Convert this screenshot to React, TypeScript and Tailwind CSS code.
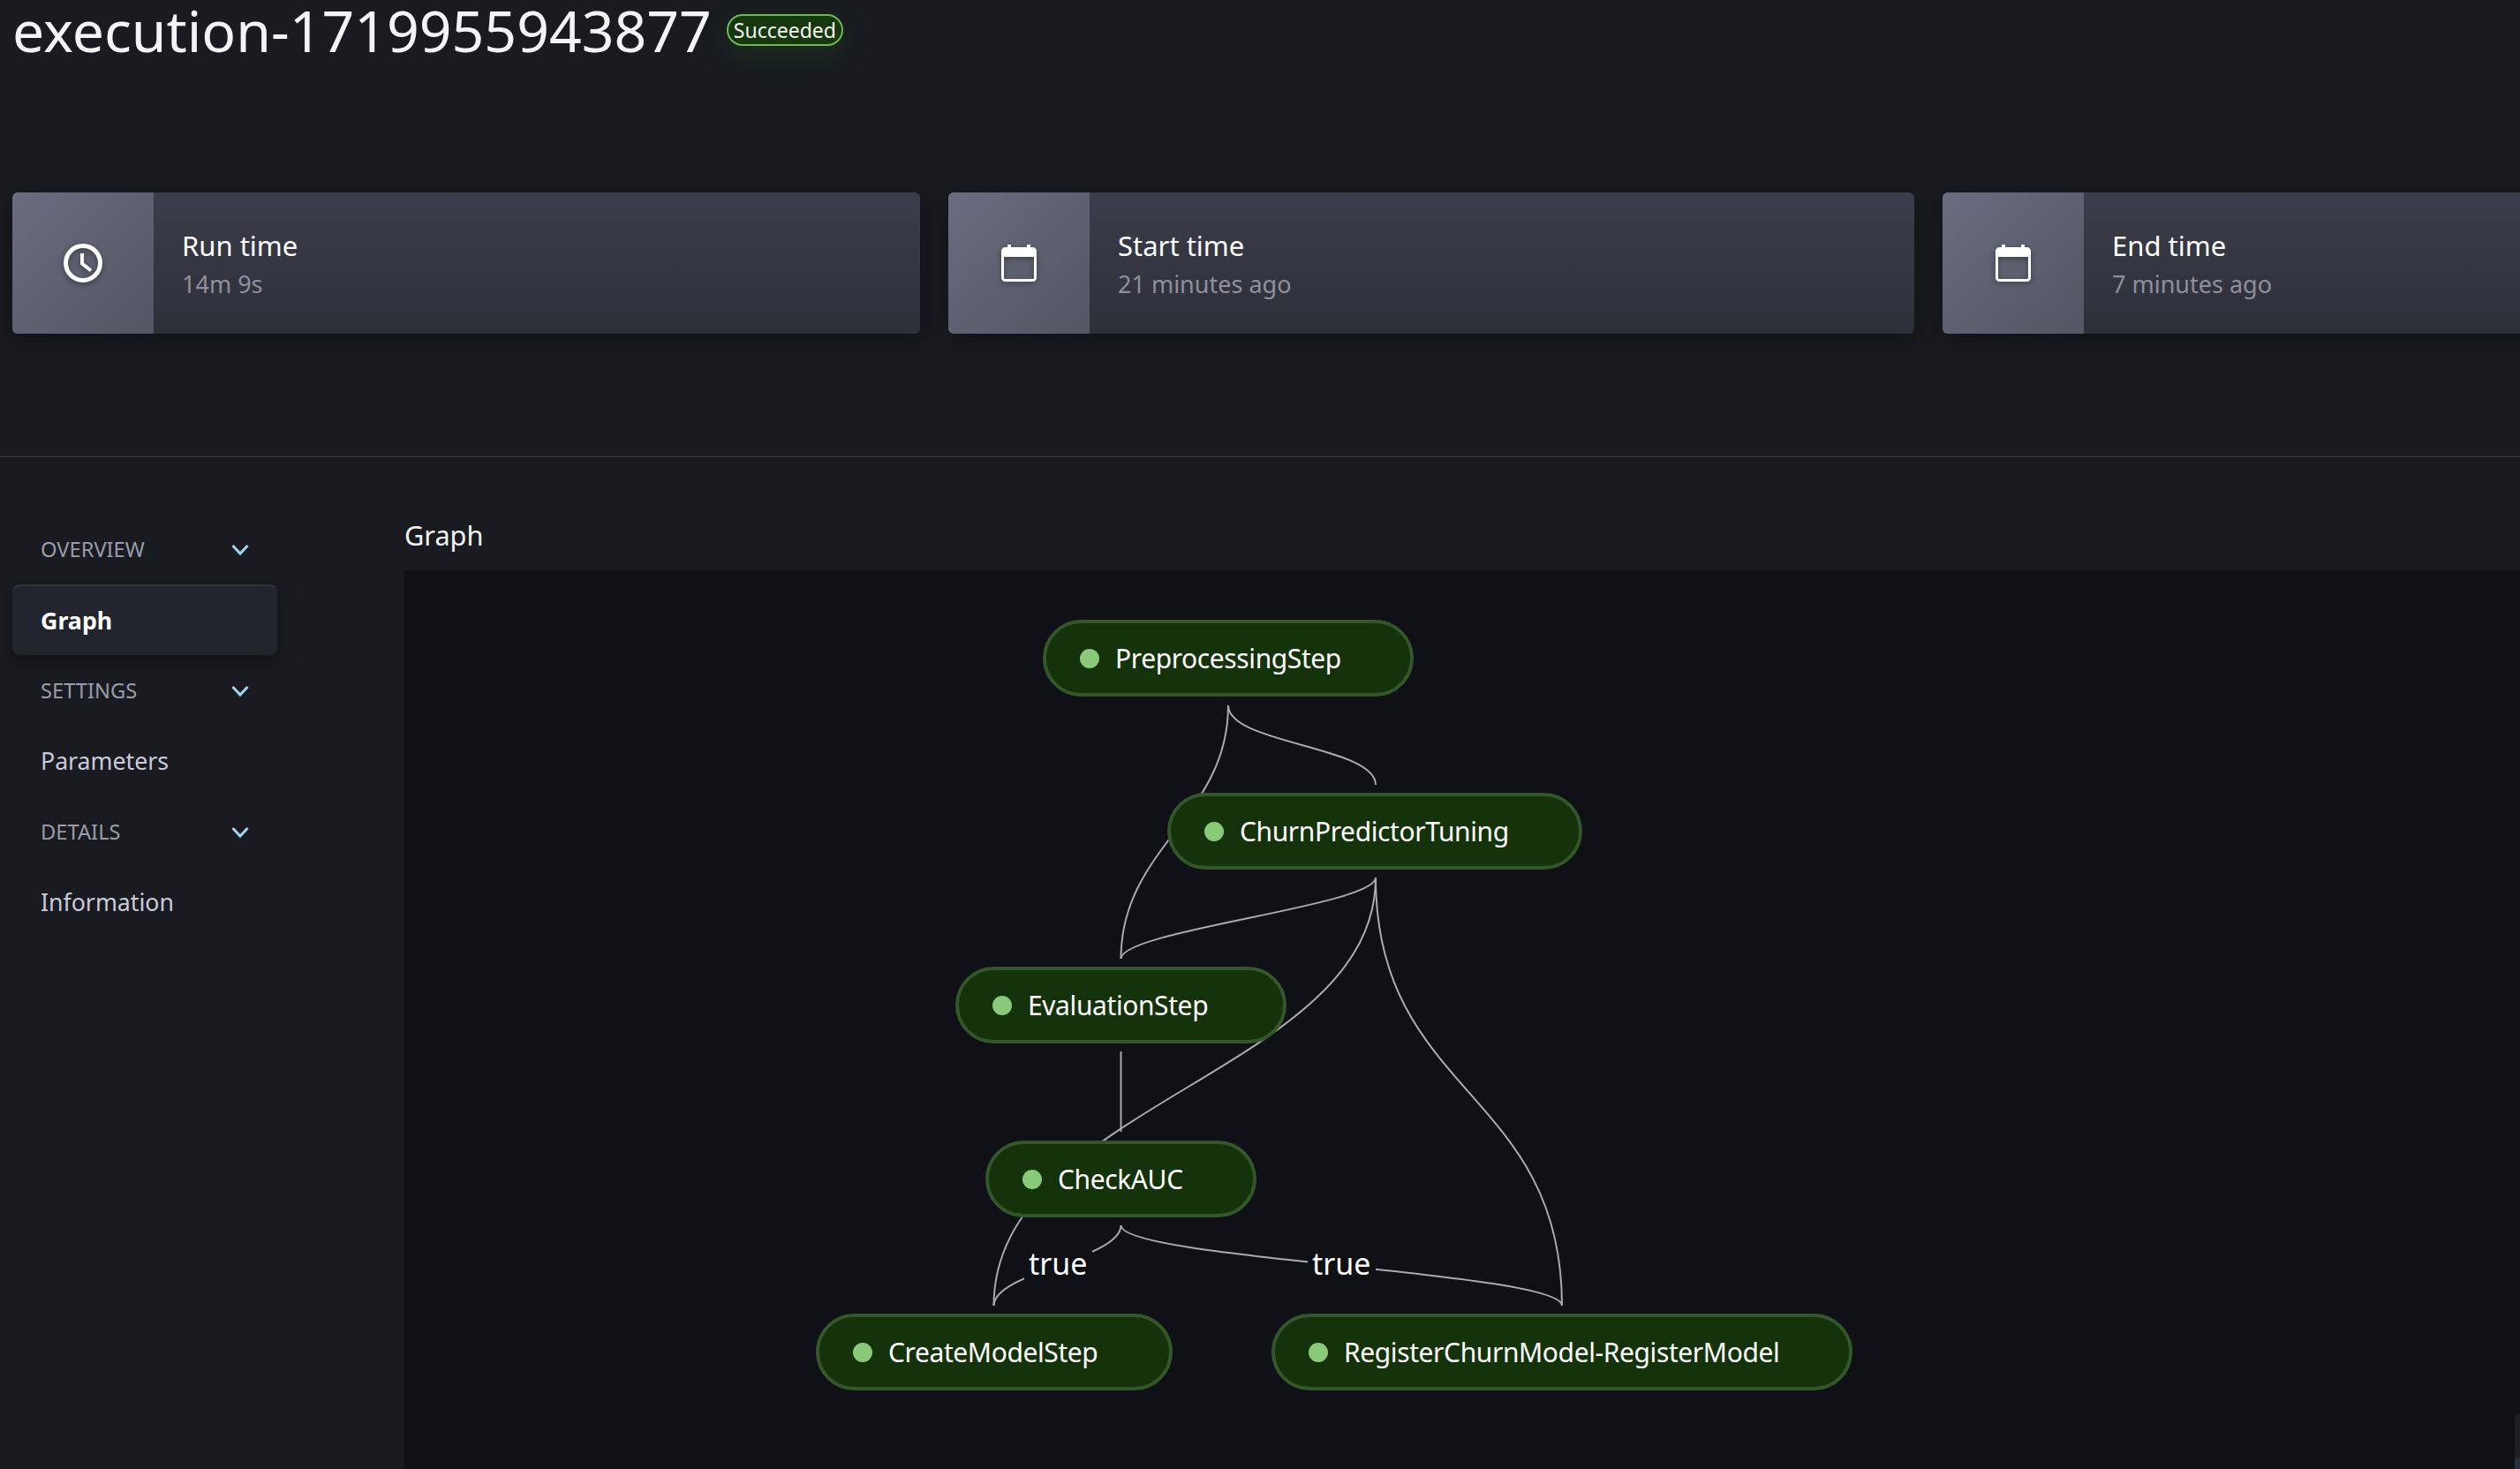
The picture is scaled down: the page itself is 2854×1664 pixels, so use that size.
const font = "font-['Noto_Sans',sans-serif]";

const sideNav = [
  { label: "OVERVIEW", heading: true },
  { label: "Graph", active: true },
  { label: "SETTINGS", heading: true },
  { label: "Parameters" },
  { label: "DETAILS", heading: true },
  { label: "Information" },
];

const nodes = [
  { name: "PreprocessingStep", pos: "left-[723px] top-[56px] w-[420px]" },
  { name: "ChurnPredictorTuning", pos: "left-[864px] top-[252px] w-[470px]" },
  { name: "EvaluationStep", pos: "left-[624px] top-[449px] w-[375px]" },
  { name: "CheckAUC", pos: "left-[658px] top-[646px] w-[307px]" },
  { name: "CreateModelStep", pos: "left-[466px] top-[842px] w-[404px]" },
  { name: "RegisterChurnModel-RegisterModel", pos: "left-[982px] top-[842px] w-[658px]" },
];

// edge paths use page coordinates, the svg viewBox is offset to the canvas
const edges = [
  "M1391 799 C1391 843 1558 845 1558 889",
  "M1391 799 C1391 925 1269.5 960 1269.5 1086",
  "M1558 994 C1558 1026 1269.5 1054 1269.5 1086",
  "M1558 994 C1558 1215 1125.5 1250 1125.5 1479",
  "M1558 994 C1558 1240 1769 1235 1769 1479",
  "M1269.5 1191 L1269.5 1282",
  "M1269.5 1388 C1269.5 1426 1125.5 1441 1125.5 1479",
  "M1269.5 1388 C1269.5 1426 1769 1441 1769 1479",
];

function ClockIcon() {
  return (
    <svg viewBox="0 0 44 44" className="w-[44px] h-[44px] drop-shadow-[0_2px_3px_rgba(0,0,0,0.4)]" fill="none" stroke="#fff">
      <circle cx="22" cy="22" r="19.5" strokeWidth="5" />
      <path d="M21 11 V22.5 L31 30.5" strokeWidth="4" />
    </svg>
  );
}

function CalendarIcon() {
  return (
    <svg viewBox="0 0 40 44" className="w-[40px] h-[44px] drop-shadow-[0_2px_3px_rgba(0,0,0,0.4)]" fill="none">
      <path d="M9 1 V8 M31 1 V8" stroke="#fff" strokeWidth="4" />
      <rect x="1.5" y="5.5" width="37" height="36" rx="3" stroke="#fff" strokeWidth="3" />
      <rect x="2" y="6" width="36" height="9" fill="#fff" />
    </svg>
  );
}

function StatCard({ icon, title, value, width }: { icon: React.ReactNode; title: string; value: string; width: string }) {
  return (
    <div className={`${width} shrink-0 h-[160px] flex rounded-[6px] overflow-hidden shadow-[0_6px_24px_rgba(0,0,0,0.35)] bg-gradient-to-b from-[#3b3d4a] to-[#2d2f39]`}>
      <div className="w-[160px] shrink-0 flex items-center justify-center bg-gradient-to-br from-[#6a6d80] to-[#535562]">
        {icon}
      </div>
      <div className="pl-[32px] pt-[40px]">
        <p className="text-[31px] leading-[40px] text-white">{title}</p>
        <p className="text-[27px] leading-[48px] text-[#8f909c]">{value}</p>
      </div>
    </div>
  );
}

function Chevron() {
  return (
    <svg viewBox="0 0 20 14" className="w-[20px] h-[14px]" fill="none" stroke="#a5d3f2" strokeWidth="3">
      <path d="M1.5 2 L10 11 L18.5 2" />
    </svg>
  );
}

export default function App() {
  return (
    <div className={`${font} w-[2854px] h-[1664px] overflow-hidden bg-[#191b20] text-white flex flex-col`}>
      <header className="h-[218px] shrink-0 pl-[14px]">
        <div className="flex items-center gap-[17px] h-[68px]">
          <h1 className="text-[64.3px] leading-[68px] font-normal text-[#f4f4f6]">execution-1719955943877</h1>
          <span className="h-[36px] px-[6px] flex items-center rounded-full border-2 border-[#6ab955] bg-[#17380e] text-[23px] text-[#f2f5ef] shadow-[0_10px_30px_rgba(40,90,30,0.3)]">
            Succeeded
          </span>
        </div>
      </header>

      <div className="flex gap-[32px] pl-[14px] shrink-0">
        <StatCard icon={<ClockIcon />} title="Run time" value="14m 9s" width="w-[1028px]" />
        <StatCard icon={<CalendarIcon />} title="Start time" value="21 minutes ago" width="w-[1094px]" />
        <StatCard icon={<CalendarIcon />} title="End time" value="7 minutes ago" width="w-[1094px]" />
      </div>

      <div className="mt-[137px] h-[3px] shrink-0 border-t border-[#15161a] bg-[#303238]" />

      <div className="flex flex-1 min-h-0">
        <nav className="w-[458px] shrink-0 pl-[14px] pt-[64px]">
          <ul className="w-[300px] flex flex-col">
            {sideNav.map((item) => (
              <li
                key={item.label}
                className={
                  item.active
                    ? "h-[80px] pl-[32px] flex items-center rounded-[8px] border-t-2 border-[#32343c] bg-[#22252d] shadow-[0_8px_20px_rgba(0,0,0,0.3)] text-[26.8px] font-bold text-white"
                    : item.heading
                      ? "h-[80px] pl-[32px] pr-[32px] pt-[2px] flex items-center justify-between text-[23.7px] text-[#9a9bab]"
                      : "h-[80px] pl-[32px] flex items-center text-[26.7px] text-[#c9cadb]"
                }
              >
                {item.label}
                {item.heading && <Chevron />}
              </li>
            ))}
          </ul>
        </nav>

        <main className="flex-1 min-w-0 flex flex-col">
          <h2 className="h-[128px] shrink-0 pt-[65px] text-[30.7px] leading-[46px] font-normal text-[#f4f4f6]">Graph</h2>
          <div className="relative flex-1 bg-[#0f1116]">
            <svg viewBox="458 646 2396 1018" className="absolute inset-0 w-full h-full" fill="none" stroke="#aaaaaf" strokeWidth="2">
              {edges.map((d) => (
                <path key={d} d={d} />
              ))}
            </svg>
            {nodes.map((node) => (
              <div
                key={node.name}
                className={`absolute ${node.pos} h-[87px] pl-[38px] flex items-center gap-[18px] rounded-full border-4 border-[#33562a] bg-[#15330a]`}
              >
                <span className="w-[22px] h-[22px] rounded-full bg-[#8bc97a]" />
                <span className="text-[30px] tracking-[-0.4px] text-white">{node.name}</span>
              </div>
            ))}
            <span className="absolute left-[702px] top-[762px] px-[5px] bg-[#0f1116] text-[34px] leading-[46px] text-white">true</span>
            <span className="absolute left-[1023px] top-[762px] px-[5px] bg-[#0f1116] text-[34px] leading-[46px] text-white">true</span>
            <div className="absolute right-0 bottom-0 w-[6px] h-[63px] rounded-tl-[6px] overflow-hidden bg-[#1e2026] flex flex-col justify-end">
              <div className="h-[12px] bg-[#28303e]" />
            </div>
          </div>
        </main>
      </div>
    </div>
  );
}
